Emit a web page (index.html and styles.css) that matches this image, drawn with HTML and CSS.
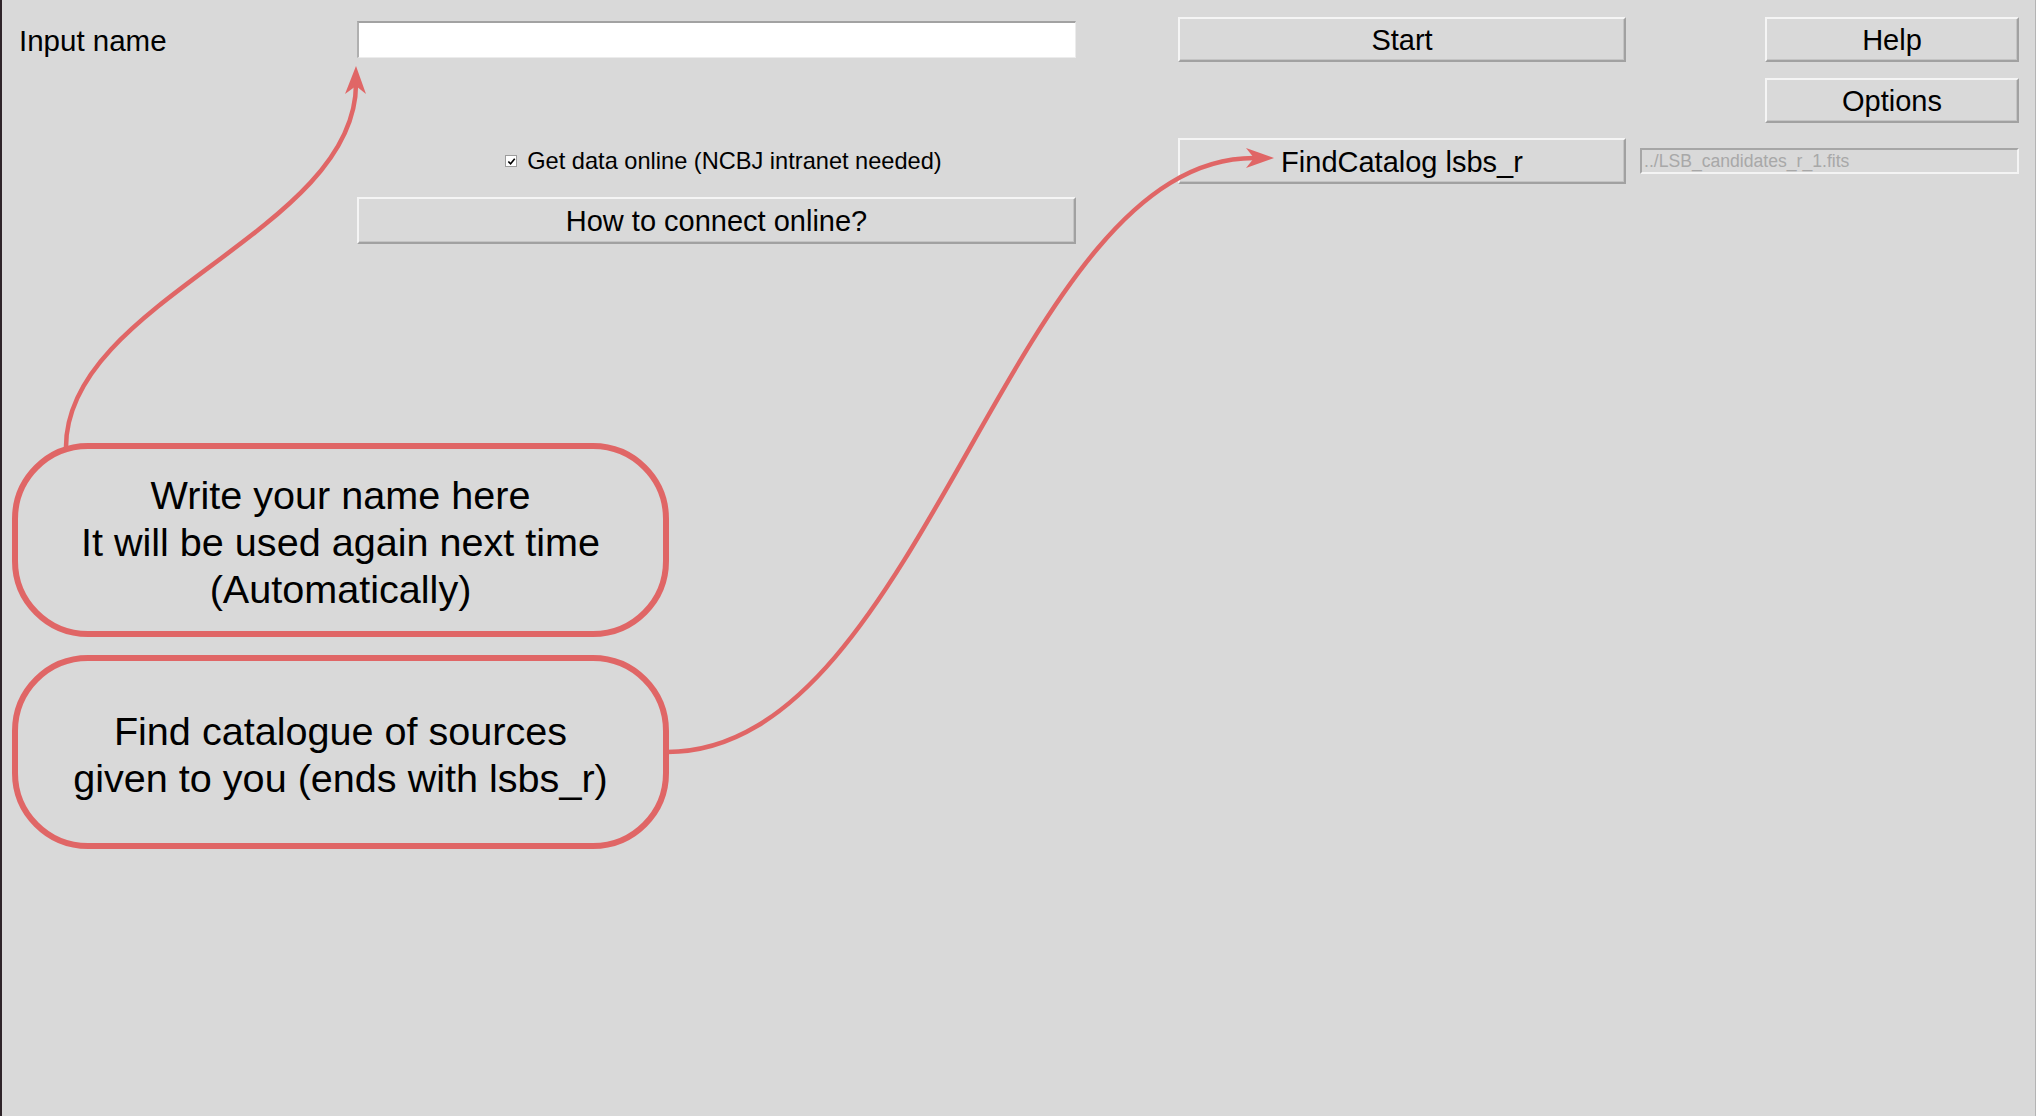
FILE: index.html
```html
<!DOCTYPE html>
<html lang="en">
<head>
<meta charset="utf-8">
<title>Catalogue tool</title>
<link rel="stylesheet" href="styles.css">
</head>
<body>
<div class="page">
  <div class="form">
    <div class="label cell-label">Input name</div>
    <div class="entry cell-entry"></div>
    <div class="btn cell-start">Start</div>
    <div class="btn cell-help">Help</div>
    <div class="btn cell-options">Options</div>
    <div class="check cell-check">
      <span class="box"><svg viewBox="0 0 10 10" width="9" height="9"><path d="M1.5 5 L4 7.6 L8.6 2" fill="none" stroke="#000" stroke-width="1.8"/></svg></span>
      <span class="check-text">Get data online (NCBJ intranet needed)</span>
    </div>
    <div class="btn cell-find">FindCatalog lsbs_r</div>
    <div class="path-field cell-path">../LSB_candidates_r_1.fits</div>
    <div class="btn cell-how">How to connect online?</div>
  </div>

  <div class="callouts">
    <div class="callout">Write your name here<br>It will be used again next time<br>(Automatically)</div>
    <div class="callout">Find catalogue of sources<br>given to you (ends with lsbs_r)</div>
  </div>

  <svg class="arrows" width="2036" height="1116" viewBox="0 0 2036 1116">
    <path d="M66 447 C66 300 356 232 356 84" fill="none" stroke="#e06666" stroke-width="4.5"/>
    <path d="M356 66 L366 94 L356 86 L345 94 Z" fill="#e06666"/>
    <path d="M667 752 C925 752 1010 158 1254 158" fill="none" stroke="#e06666" stroke-width="4.5"/>
    <path d="M1274 158 L1246 148 L1254 158 L1246 168 Z" fill="#e06666"/>
  </svg>
</div>
</body>
</html>
```

FILE: styles.css
```css
html, body {
  margin: 0;
  padding: 0;
  background: #d9d9d9;
}

.page {
  position: relative;
  width: 2036px;
  height: 1116px;
  box-sizing: border-box;
  border-left: 2px solid #2e2429;
  border-right: 1px solid #b4b4b4;
  background: #d9d9d9;
  font-family: "Liberation Sans", Arial, sans-serif;
  color: #000;
  overflow: hidden;
}

.form {
  display: grid;
  grid-template-columns: 355px 719px 102px 448px 14px 125px 254px;
  grid-template-rows: 45px 16px 45px 15px 46px 13px 47px;
  padding-top: 17px;
}

.label {
  font-size: 29.5px;
  display: flex;
  align-items: center;
  padding-left: 17px;
  padding-top: 2px;
}

.cell-label { grid-column: 1; grid-row: 1; }
.cell-entry { grid-column: 2; grid-row: 1; }
.cell-start { grid-column: 4; grid-row: 1; }
.cell-help { grid-column: 7; grid-row: 1; }
.cell-options { grid-column: 7; grid-row: 3; }
.cell-check { grid-column: 2; grid-row: 5; }
.cell-find { grid-column: 4; grid-row: 5; }
.cell-path { grid-column: 6 / span 2; grid-row: 5; }
.cell-how { grid-column: 2; grid-row: 7; }

.entry {
  align-self: center;
  height: 37px;
  box-sizing: border-box;
  background: #fff;
  border-top: 2px solid #a2a2a2;
  border-left: 2px solid #b0b0b0;
  border-right: 1px solid #ececec;
  border-bottom: 1px solid #ececec;
}

.btn {
  box-sizing: border-box;
  background: #d9d9d9;
  border-top: 2px solid #f5f5f5;
  border-left: 2px solid #f5f5f5;
  border-right: 2px solid #a1a1a1;
  border-bottom: 2px solid #a1a1a1;
  box-shadow: inset -1px -1px 0 #c4c4c4;
  font-size: 29px;
  display: flex;
  align-items: center;
  justify-content: center;
  padding-top: 2px;
}

.check {
  display: flex;
  align-items: center;
  justify-content: center;
  gap: 10px;
  font-size: 23.6px;
  padding-left: 14px;
}

.box {
  width: 12px;
  height: 12px;
  box-sizing: border-box;
  background: #fff;
  border: 1px solid #9c9c9c;
  display: flex;
  align-items: center;
  justify-content: center;
}

.path-field {
  align-self: center;
  height: 26px;
  box-sizing: border-box;
  border-top: 2px solid #a6a6a6;
  border-left: 2px solid #a6a6a6;
  border-right: 2px solid #f4f4f4;
  border-bottom: 2px solid #f4f4f4;
  color: #a8a8a8;
  font-size: 17.6px;
  display: flex;
  align-items: center;
  padding-left: 2px;
  white-space: nowrap;
  overflow: hidden;
}

.callouts {
  display: flex;
  flex-direction: column;
  gap: 18px;
  margin-top: 199px;
  margin-left: 10px;
  width: 657px;
}

.callout {
  height: 194px;
  box-sizing: border-box;
  border: 6px solid #e06666;
  border-radius: 76px;
  display: flex;
  align-items: center;
  justify-content: center;
  text-align: center;
  font-size: 39.6px;
  line-height: 47px;
  padding-top: 5px;
}

.arrows {
  position: absolute;
  top: 0;
  left: -2px;
  pointer-events: none;
}
```
